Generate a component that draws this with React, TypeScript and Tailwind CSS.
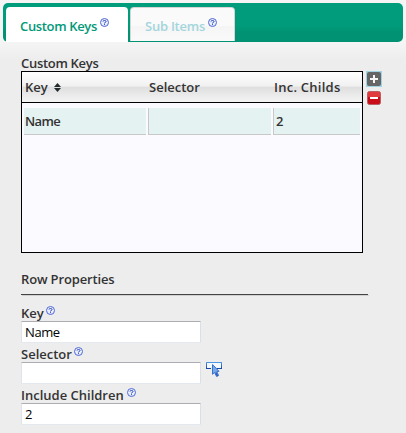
import React from 'react';

function Help({ className = '' }: { className?: string }) {
  return (
    <svg className={`h-[9px] w-[9px] shrink-0 ${className}`} viewBox="0 0 9 9" aria-label="Help">
      <circle cx="4.5" cy="4.5" r="4" fill="#e9efff" stroke="#5068d2" />
      <path d="M3 3.5Q3 2.5 4.5 2.5T6 3.5Q6 4.3 4.5 4.9V5.4M4.5 6.2V7.2" fill="none" stroke="#2943b5" />
    </svg>
  );
}

function Field({ label, value, width, picker }: { label: string; value: string; width: string; picker?: boolean }) {
  return (
    <div className="h-[41px]">
      <div className="flex h-[15px] leading-[15px]">
        <span className={`whitespace-nowrap ${width}`}>{label}</span>
        <Help className="ml-1" />
      </div>
      <div className="flex h-[22px]">
        <input
          aria-label={label}
          defaultValue={value}
          className="h-[22px] w-[180px] rounded-[1px] border border-[#e2e3ea] border-t-[#abadb3] border-r-[#dbdfe6] border-b-[#e3e9ef] bg-white px-[3px] pb-px font-medium tracking-[-0.4px] text-black outline-none"
        />
        {picker && (
          <svg className="ml-[5px] h-4 w-4" viewBox="0 0 16 16">
            <defs>
              <linearGradient id="frame" x2="0" y2="1">
                <stop stopColor="#5095df" />
                <stop offset="1" stopColor="#1748a8" />
              </linearGradient>
            </defs>
            <rect x=".5" y=".5" width="15" height="6" fill="#f4f8ff" stroke="url(#frame)" />
            <path d="M5 5V8H11V5Z" fill="#ededed" />
            <path d="M6.5 2.5V12.3L8.6 10.5L10.6 14.5L12.6 13.5L10.8 9.7L13 9.3Z" fill="#76a9e7" stroke="#3d70cb" />
            <path d="M9.8 10.5L11.5 14" stroke="#295fc4" strokeWidth="1.5" />
          </svg>
        )}
      </div>
    </div>
  );
}

export default function App() {
  return (
    <main className="h-[433px] w-[406px] overflow-hidden bg-[#ededed] bg-[linear-gradient(#f5f5f5_0px,#f5f5f5_42px,#ededed_60px)] pt-[3px] font-['Open_Sans','Liberation_Sans',sans-serif] text-[13px] font-[560] text-[#333]">
      <nav className="mx-[3px] flex h-[39px] rounded-[5px] bg-[linear-gradient(#009d7c_0%,#009b7a_60%,#009272_75%,#009272_100%)] pt-1 pl-[3px]">
        <div className="flex h-[35px] w-[122px] rounded-t-[4px] bg-white pt-[10px] pl-[14px] text-[#009978]">
          <span className="w-[79px] leading-[19px] font-semibold tracking-[-0.35px] whitespace-nowrap">Custom Keys</span>
          <Help className="mt-px ml-px" />
        </div>
        <div className="ml-[2px] flex h-[34px] w-[105px] rounded-t-[4px] border border-b-0 border-[#d5d5d5] bg-[linear-gradient(#fafafa_55%,#f5f5f5_56%,#fafafa)] pt-[9px] pl-[14px] text-[#a4d5dd]">
          <span className="w-[62px] leading-[19px] font-semibold tracking-[-0.25px] whitespace-nowrap">Sub Items</span>
          <Help className="mt-px ml-px" />
        </div>
      </nav>

      <section className="pt-[14px] pl-[21px]">
        <h2 className="h-[15px] leading-[15px] tracking-[-0.3px]">Custom Keys</h2>
        <div className="flex">
          <div className="h-[182px] w-[342px] border border-black bg-[#fafaff]">
            <div className="flex h-[31px] border-b border-black bg-[linear-gradient(#fff_0%,#f0f0f0_48%,#dedede_49%,#f4f4f4_100%)] leading-[31px]">
              <div className="flex w-[124px] items-center pl-[3px]">
                <span className="w-[22px]">Key</span>
                <svg className="ml-[7px] h-[9px] w-[7px]" viewBox="0 0 7 9">
                  <path d="M0 4L3.5 0L7 4ZM0 5H7L3.5 9Z" fill="#222b2b" />
                </svg>
              </div>
              <div className="w-[125px] pl-[3px]">Selector</div>
              <div className="pl-[3px] tracking-[0.25px] whitespace-nowrap">Inc. Childs</div>
            </div>
            <div className="mt-[5px] ml-[2px] flex h-[27px] gap-[2px] leading-[26px]">
              <div className="w-[122px] border-b border-[#c8c8c8] bg-[#e4f2f1] pl-px tracking-[-0.6px]">Name</div>
              <div className="w-[123px] border-b border-l border-[#c8c8c8] bg-[#e4f2f1]" />
              <div className="w-[87px] border-b border-l border-[#c8c8c8] bg-[#e4f2f1] pl-[2px]">2</div>
            </div>
          </div>
          <div className="ml-[3px] flex w-4 flex-col items-center gap-[3px]">
            <svg className="h-4 w-4" viewBox="0 0 16 16">
              <path d="M0 0H16V16H0Z" fill="#9fd3e3" />
              <rect x="1" y="1" width="14" height="14" rx="2" fill="#666" />
              <path d="M4 8H12M8 4V12" stroke="#f6f6f6" strokeWidth="2" />
            </svg>
            <svg className="h-4 w-4" viewBox="0 0 16 16">
              <rect x="1.5" y="1.5" width="13" height="13" rx="2" fill="#c90d18" stroke="#b66064" />
              <path d="M2 2H14V7H2Z" fill="#e13a3d" />
              <path d="M4 8H12" stroke="#fff" strokeWidth="2" />
            </svg>
          </div>
        </div>
        <h2 className="mt-[18px] h-[23px] leading-[17px] tracking-[-0.15px]">Row Properties</h2>
        <hr className="h-px w-[347px] border-0 bg-[#444] shadow-[1px_1px_0_#d0d0d0]" />
        <div className="pt-[11px]">
          <Field label="Key" value="Name" width="w-[21px]" />
          <Field label="Selector" value="" width="w-[49px]" picker />
          <Field label="Include Children" value="2" width="w-[102px]" />
        </div>
      </section>
    </main>
  );
}
